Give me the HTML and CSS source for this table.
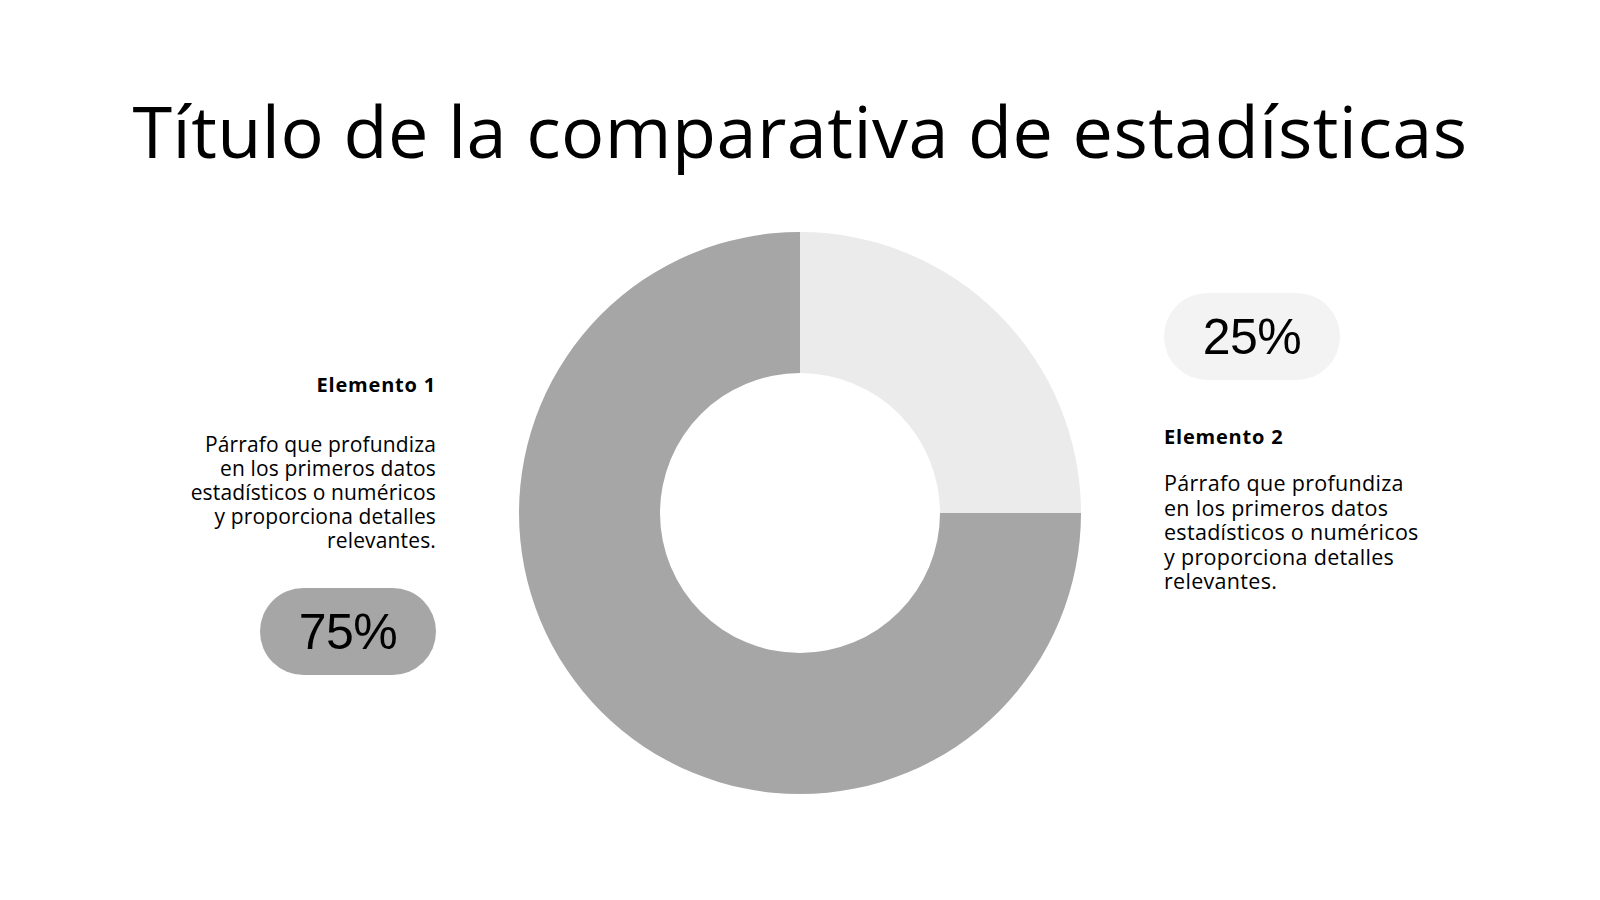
FILE: index.html
```html
<!DOCTYPE html>
<html lang="es">
<head>
<meta charset="utf-8">
<title>Comparativa de estadísticas</title>
<link rel="stylesheet" href="styles.css">
</head>
<body>
<main class="slide">
  <h1 class="title">Título de la comparativa de estadísticas</h1>
  <section class="row">
    <div class="col col-left">
      <h2 class="item-title">Elemento 1</h2>
      <p class="item-text">Párrafo que profundiza<br>en los primeros datos<br>estadísticos o numéricos<br>y proporciona detalles<br>relevantes.</p>
      <div class="pill pill-dark">75%</div>
    </div>
    <div class="chart">
      <svg width="562" height="562" viewBox="0 0 562 562">
        <path class="seg-light" d="M281 0 A281 281 0 0 1 562 281 L421 281 A140 140 0 0 0 281 141 Z"/>
        <path class="seg-dark" d="M281 0 L281 141 A140 140 0 1 0 421 281 L562 281 A281 281 0 1 1 281 0 Z"/>
      </svg>
    </div>
    <div class="col col-right">
      <div class="pill pill-light">25%</div>
      <h2 class="item-title item-title-right">Elemento 2</h2>
      <p class="item-text item-text-right">Párrafo que profundiza<br>en los primeros datos<br>estadísticos o numéricos<br>y proporciona detalles<br>relevantes.</p>
    </div>
  </section>
</main>
</body>
</html>
```
FILE: styles.css
```css
html, body {
  margin: 0;
  padding: 0;
  background: #ffffff;
}
body {
  font-family: "Open Sans", "Noto Sans", sans-serif;
  color: #000000;
}
.slide {
  width: 1600px;
  height: 900px;
  box-sizing: border-box;
  padding-top: 94px;
  display: flex;
  flex-direction: column;
  align-items: center;
  overflow: hidden;
}
.title {
  margin: 0;
  font-size: 72px;
  line-height: 1;
  font-weight: 400;
  letter-spacing: 0.45px;
  text-align: center;
  white-space: nowrap;
  font-variant-ligatures: none;
}
.row {
  margin-top: 66px;
  display: flex;
  align-items: flex-start;
  gap: 83px;
}
.col {
  width: 260px;
  display: flex;
  flex-direction: column;
}
.col-left {
  align-items: flex-end;
  text-align: right;
  padding-top: 141px;
}
.col-right {
  align-items: flex-start;
  text-align: left;
  padding-top: 61px;
}
.item-title {
  margin: 0;
  font-size: 20px;
  line-height: 24px;
  font-weight: 700;
  letter-spacing: 0.8px;
}
.item-title-right {
  margin-top: 45px;
}
.item-text {
  margin: 35px 0 0 0;
  font-size: 21px;
  line-height: 24px;
  font-weight: 400;
  letter-spacing: 0.15px;
  white-space: nowrap;
}
.item-text-right {
  margin-top: 22px;
  font-size: 21.5px;
  line-height: 24.5px;
  letter-spacing: 0.3px;
}
.col-left .pill {
  margin-top: 36px;
}
.pill {
  width: 176px;
  height: 87px;
  border-radius: 44px;
  display: flex;
  align-items: center;
  justify-content: center;
  font-family: "Liberation Sans", Arial, sans-serif;
  font-size: 50px;
  letter-spacing: -0.5px;
}
.pill-dark {
  background: #a6a6a6;
}
.pill-light {
  background: #f3f3f3;
}
.chart {
  width: 562px;
  height: 562px;
}
.chart svg {
  display: block;
}
.seg-light {
  fill: #ebebeb;
}
.seg-dark {
  fill: #a6a6a6;
}
```
